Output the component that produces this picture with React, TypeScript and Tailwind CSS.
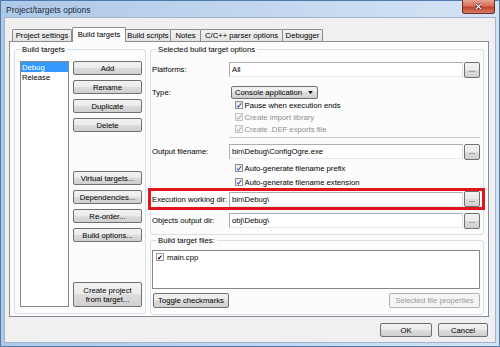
import React from "react";

const btnFace =
  "flex items-center justify-center border border-[#707070] rounded-[2px] bg-[linear-gradient(#f2f2f2_0%,#ebebeb_50%,#dddddd_50%,#cfcfcf_100%)] text-black";

const Btn = ({
  children,
  className = "",
}: {
  children: React.ReactNode;
  className?: string;
}) => (
  <button type="button" className={`${btnFace} ${className}`}>
    {children}
  </button>
);

const Check = ({ disabled = false }: { disabled?: boolean }) => (
  <span
    className={`flex items-center justify-center w-[8px] h-[8px] border ${
      disabled
        ? "border-[#c4c4c4] bg-[#f4f4f4]"
        : "border-[#8e8f8f] bg-[linear-gradient(#e4e4e4,#ffffff)]"
    }`}
  >
    <svg viewBox="0 0 8 8" className="w-[7px] h-[7px]">
      <path
        d="M1.2 4.2 L3.1 6.2 L6.9 1.2"
        stroke={disabled ? "#b4b4b4" : "#3b5ea8"}
        strokeWidth="1.4"
        fill="none"
      />
    </svg>
  </span>
);

const CheckRow = ({
  label,
  disabled = false,
  height = "h-[12px]",
}: {
  label: string;
  disabled?: boolean;
  height?: string;
}) => (
  <div className={`flex items-center gap-[1.5px] pl-[83px] ${height}`}>
    <Check disabled={disabled} />
    <span className={disabled ? "text-[#8d8d8d]" : "text-black"}>{label}</span>
  </div>
);

const FieldRow = ({ label, value }: { label: string; value: string }) => (
  <div className="flex items-center h-[15px]">
    <span className="w-[77px] shrink-0">{label}</span>
    <div className="flex-1 h-[15px] flex items-center pl-[2px] bg-white border border-[#abadb3] border-b-[#e3e9ef] border-r-[#dbdfe6]">
      {value}
    </div>
    <Btn className="w-[16px] h-[16px] ml-[1px] text-[7px] leading-none">...</Btn>
  </div>
);

const GroupBox = ({
  label,
  className = "",
  children,
}: {
  label: string;
  className?: string;
  children: React.ReactNode;
}) => (
  <div className={`relative border border-[#d5dfe5] rounded-[3px] ${className}`}>
    <span className="absolute -top-[5px] left-[5px] px-[2px] bg-[#fcfcfc] leading-[9px]">
      {label}
    </span>
    {children}
  </div>
);

const tabs = [
  { name: "Project settings", w: "w-[60px]" },
  { name: "Build targets", w: "w-[54px]", active: true },
  { name: "Build scripts", w: "w-[46px]" },
  { name: "Notes", w: "w-[31px]" },
  { name: "C/C++ parser options", w: "w-[83px]" },
  { name: "Debugger", w: "w-[41px]" },
];

export default function App() {
  return (
    <div className="w-[500px] h-[347px] flex flex-col overflow-hidden font-['Liberation_Sans',Arial,sans-serif] text-[7.7px] leading-[9px] text-black bg-[linear-gradient(to_right,#aec8e8,#c3d8ef_55%,#d5e4f5)] shadow-[inset_0_0_0_1px_#5079ad]">
      {/* title bar */}
      <div className="h-[18px] flex items-start shrink-0">
        <span className="pl-[6px] pt-[6px] text-[8.5px] leading-[9px] text-[#1e2b3c]">
          Project/targets options
        </span>
        <div className="ml-auto mr-[5px] w-[33px] h-[14px] flex items-center justify-center rounded-b-[3px] border border-t-0 border-[#6b2c26] bg-[linear-gradient(#e8a393_0%,#d6705b_45%,#c1432c_55%,#d77f63_100%)]">
          <svg viewBox="0 0 10 8" className="w-[9px] h-[7px]">
            <path d="M2 1 L8 7 M8 1 L2 7" stroke="#4a1c17" strokeWidth="2.6" />
            <path d="M2 1 L8 7 M8 1 L2 7" stroke="#ffffff" strokeWidth="1.5" />
          </svg>
        </div>
      </div>

      {/* client area */}
      <div className="mx-[5px] h-[324px] bg-[#f0f0f0] shadow-[0_0_0_1px_#9fb3cf] flex flex-col">
        {/* tabs */}
        <div className="flex items-end pt-[9px] pl-[7px]">
          {tabs.map((t) =>
            t.active ? (
              <div
                key={t.name}
                className={`${t.w} h-[15px] -mb-[1px] relative z-10 flex items-start justify-center pt-[2px] bg-[#fcfcfc] border border-b-0 border-[#898c95] rounded-t-[2px]`}
              >
                {t.name}
              </div>
            ) : (
              <div
                key={t.name}
                className={`${t.w} h-[12px] flex items-center justify-center border border-b-0 border-[#898c95] -ml-[1px] first:ml-0 bg-[linear-gradient(#f2f2f2,#e3e3e3)] rounded-t-[2px]`}
              >
                {t.name}
              </div>
            )
          )}
        </div>

        {/* tab page */}
        <div className="ml-[4px] w-[480px] h-[276px] border border-[#898c95] bg-[#fcfcfc] flex items-start gap-[4px] pl-[4px] pt-[7px]">
          {/* left group */}
          <GroupBox label="Build targets" className="w-[132px] h-[265px]">
            <div className="flex gap-[4px] pl-[5px] pt-[11px]">
              <div className="w-[49px] h-[246px] border border-[#828790] bg-white flex flex-col">
                <div className="h-[10px] pl-[1px] flex items-center bg-[#3399ff] text-white">
                  Debug
                </div>
                <div className="h-[10px] pl-[1px] flex items-center">Release</div>
              </div>
              <div className="w-[69px] flex flex-col">
                <Btn className="h-[14px]">Add</Btn>
                <Btn className="h-[14px] mt-[5px]">Rename</Btn>
                <Btn className="h-[14px] mt-[5px]">Duplicate</Btn>
                <Btn className="h-[14px] mt-[5px]">Delete</Btn>
                <Btn className="h-[14px] mt-[39px]">Virtual targets...</Btn>
                <Btn className="h-[14px] mt-[5px]">Dependencies...</Btn>
                <Btn className="h-[14px] mt-[5px]">Re-order...</Btn>
                <Btn className="h-[14px] mt-[5px]">Build options...</Btn>
                <Btn className="h-[25px] mt-[40px] flex-col leading-[9px]">
                  <span>Create project</span>
                  <span>from target...</span>
                </Btn>
              </div>
            </div>
          </GroupBox>

          {/* right column */}
          <div className="w-[334px] flex flex-col">
            <GroupBox label="Selected build target options" className="h-[186px]">
              <div className="flex flex-col pt-[12px] pl-[1px] pr-[3px]">
                <FieldRow label="Platforms:" value="All" />
                <div className="flex items-center h-[13px] mt-[9px]">
                  <span className="w-[77px] shrink-0">Type:</span>
                  <div
                    className={`${btnFace} ml-[2px] w-[87px] h-[13px] !justify-between pl-[3px] pr-[4px]`}
                  >
                    <span>Console application</span>
                    <svg viewBox="0 0 6 4" className="w-[5px] h-[3px]">
                      <path d="M0 0 H6 L3 4 Z" fill="#000" />
                    </svg>
                  </div>
                </div>
                <CheckRow label="Pause when execution ends" />
                <CheckRow label="Create import library" disabled />
                <CheckRow label="Create .DEF exports file" disabled />
                <div className="mt-[2px] ml-[77px] h-px bg-[#c8c8c8]" />
                <div className="mt-[6px]">
                  <FieldRow label="Output filename:" value="bin\Debug\ConfigOgre.exe" />
                </div>
                <div className="mt-[2px]">
                  <CheckRow label="Auto-generate filename prefix" height="h-[14px]" />
                  <CheckRow label="Auto-generate filename extension" height="h-[14px]" />
                </div>
                <div className="-mt-[1px] -ml-[4px] -mr-[5px] h-[22px] border-[3px] border-[#e3151c] flex flex-col justify-center pl-[1px] pr-[2px]">
                  <FieldRow label="Execution working dir:" value="bin\Debug\" />
                </div>
                <div className="mt-[3px]">
                  <FieldRow label="Objects output dir:" value="obj\Debug\" />
                </div>
              </div>
            </GroupBox>

            <GroupBox label="Build target files:" className="mt-[5px] h-[75px]">
              <div className="flex flex-col pt-[9px] pl-[1px] pr-[3px]">
                <div className="h-[39px] border border-[#828790] bg-white">
                  <div className="h-[12px] flex items-center gap-[3px] pl-[3px]">
                    <span className="w-[8px] h-[8px] border border-[#9a9a9a] bg-white flex items-center justify-center text-[7px] leading-none">
                      ✔
                    </span>
                    <span>main.cpp</span>
                  </div>
                </div>
                <div className="flex justify-between mt-[4px] pl-[1px]">
                  <Btn className="w-[76px] h-[15px]">Toggle checkmarks</Btn>
                  <div className="w-[91px] h-[15px] flex items-center justify-center border border-[#adb2b5] rounded-[2px] bg-[#f4f4f4] text-[#9a9a9a]">
                    Selected file properties
                  </div>
                </div>
              </div>
            </GroupBox>
          </div>
        </div>

        {/* dialog buttons */}
        <div className="flex justify-end gap-[6px] mt-[6px] pr-[7px]">
          <Btn className="w-[52px] h-[14px]">OK</Btn>
          <Btn className="w-[50px] h-[14px]">Cancel</Btn>
        </div>
      </div>
    </div>
  );
}
